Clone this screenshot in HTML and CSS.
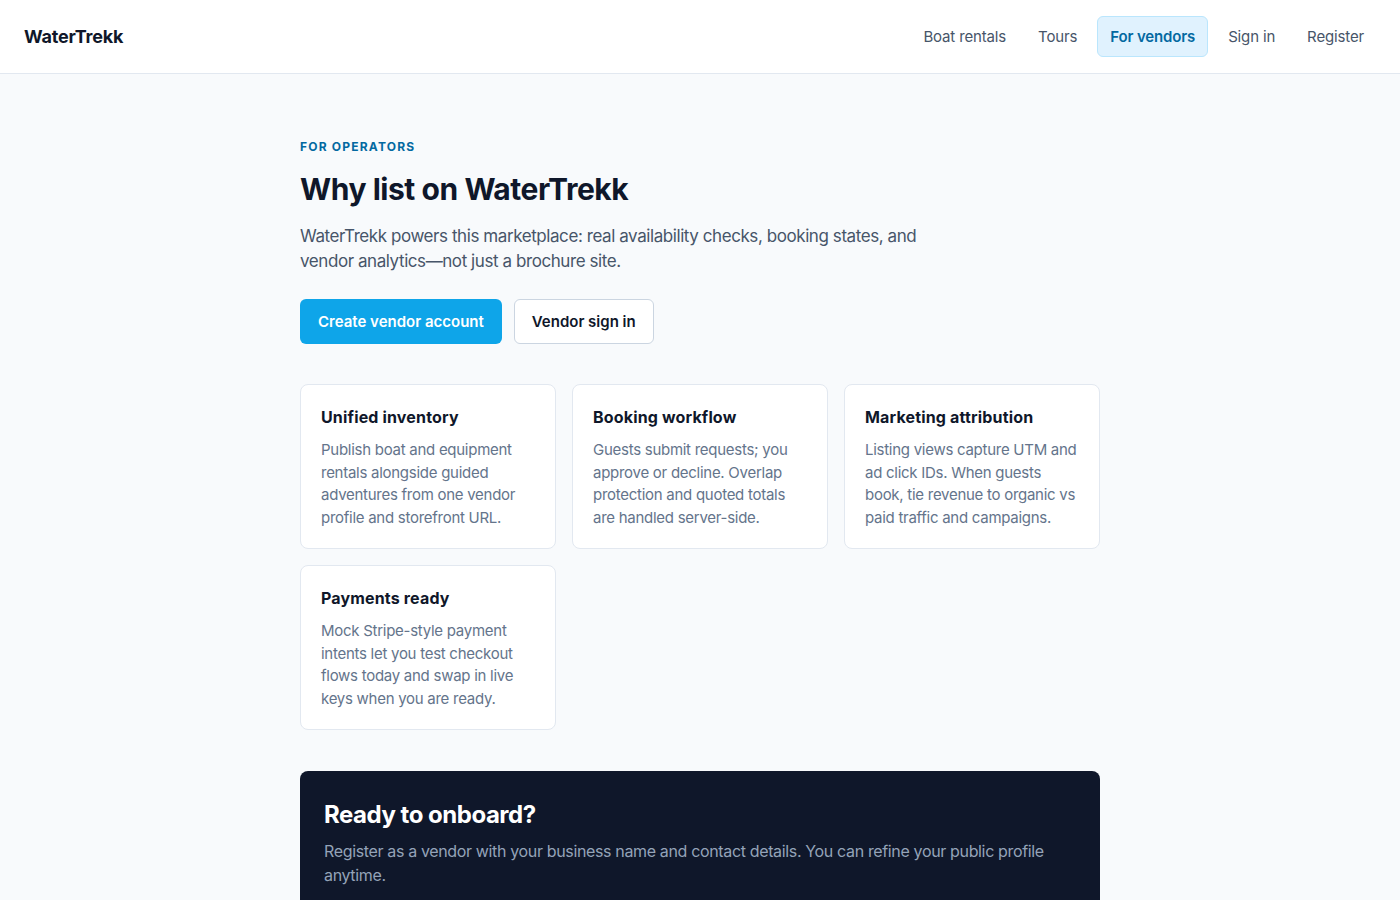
FILE: index.html
```html
<!DOCTYPE html>
<html lang="en">
<head>
<meta charset="utf-8">
<title>WaterTrekk — For vendors</title>
<link rel="stylesheet" href="styles.css">
</head>
<body>
<header class="site-header">
  <a class="logo" href="#">WaterTrekk</a>
  <nav class="nav">
    <a class="nav-link" href="#">Boat rentals</a>
    <a class="nav-link" href="#">Tours</a>
    <a class="nav-link active" href="#">For vendors</a>
    <a class="nav-link" href="#">Sign in</a>
    <a class="nav-link" href="#">Register</a>
  </nav>
</header>
<main class="main">
  <section class="hero">
    <p class="eyebrow">For operators</p>
    <h1 class="title">Why list on WaterTrekk</h1>
    <p class="lead">WaterTrekk powers this marketplace: real availability checks, booking states, and vendor analytics—not just a brochure site.</p>
    <div class="actions">
      <a class="btn btn-primary" href="#">Create vendor account</a>
      <a class="btn btn-secondary" href="#">Vendor sign in</a>
    </div>
  </section>
  <section class="features">
    <article class="card">
      <h2 class="card-title">Unified inventory</h2>
      <p class="card-text">Publish boat and equipment rentals alongside guided adventures from one vendor profile and storefront URL.</p>
    </article>
    <article class="card">
      <h2 class="card-title">Booking workflow</h2>
      <p class="card-text">Guests submit requests; you approve or decline. Overlap protection and quoted totals are handled server-side.</p>
    </article>
    <article class="card">
      <h2 class="card-title">Marketing attribution</h2>
      <p class="card-text">Listing views capture UTM and ad click IDs. When guests book, tie revenue to organic vs paid traffic and campaigns.</p>
    </article>
    <article class="card">
      <h2 class="card-title">Payments ready</h2>
      <p class="card-text">Mock Stripe-style payment intents let you test checkout flows today and swap in live keys when you are ready.</p>
    </article>
  </section>
  <section class="cta">
    <h2 class="cta-title">Ready to onboard?</h2>
    <p class="cta-text">Register as a vendor with your business name and contact details. You can refine your public profile anytime.</p>
  </section>
</main>
</body>
</html>
```
FILE: styles.css
```css
* { box-sizing: border-box; }
html, body { margin: 0; padding: 0; }
body {
  font-family: Inter, "Noto Sans", "Liberation Sans", sans-serif;
  background: #f8fafc;
  color: #0f172a;
  -webkit-font-smoothing: antialiased;
}
a { text-decoration: none; color: inherit; }
h1, h2, p { margin: 0; }

.site-header {
  height: 74px;
  background: #ffffff;
  border-bottom: 1px solid #e2e8f0;
  display: flex;
  align-items: center;
  justify-content: space-between;
  padding: 0 24px;
}
.logo {
  font-size: 18px;
  font-weight: 700;
  color: #0f172a;
  letter-spacing: -0.01em;
}
.nav {
  display: flex;
  align-items: center;
  gap: 8px;
  margin-top: -1px;
}
.nav-link {
  font-size: 15px;
  line-height: 21px;
  padding: 9px 11px;
  border: 1px solid transparent;
  border-radius: 6px;
  color: #475569;
  letter-spacing: -0.01em;
}
.nav-link.active {
  background: #e0f2fe;
  border-color: #bae6fd;
  color: #0369a1;
  font-weight: 600;
  padding: 9px 12px;
}

.main {
  max-width: 800px;
  margin: 0 auto;
  padding: 65px 0 0;
}
.eyebrow {
  font-size: 12px;
  line-height: 16px;
  font-weight: 700;
  text-transform: uppercase;
  letter-spacing: 0.1em;
  color: #0369a1;
}
.title {
  margin-top: 15px;
  font-size: 30px;
  line-height: 38px;
  font-weight: 700;
  letter-spacing: -0.015em;
  color: #0f172a;
}
.lead {
  margin-top: 16px;
  max-width: 640px;
  font-size: 17px;
  line-height: 25px;
  color: #475569;
  letter-spacing: -0.025em;
}
.actions {
  margin-top: 25px;
  display: flex;
  gap: 12px;
}
.btn {
  display: inline-block;
  font-size: 15px;
  line-height: 21px;
  font-weight: 600;
  padding: 11px 17px;
  border: 1px solid transparent;
  border-radius: 6px;
}
.btn-primary {
  background: #0ea5e9;
  color: #ffffff;
}
.btn-secondary {
  background: #ffffff;
  border-color: #cbd5e1;
  color: #0f172a;
}

.features {
  margin-top: 40px;
  display: grid;
  grid-template-columns: repeat(3, 1fr);
  gap: 16px 16px;
}
.card {
  background: #ffffff;
  border: 1px solid #e2e8f0;
  border-radius: 8px;
  padding: 20px 20px 19px;
}
.card-title {
  font-size: 16px;
  line-height: 24px;
  font-weight: 700;
  color: #0f172a;
  letter-spacing: 0.01em;
}
.card-text {
  margin-top: 10px;
  font-size: 15px;
  line-height: 22.5px;
  color: #64748b;
  letter-spacing: -0.018em;
}

.cta {
  margin-top: 41px;
  background: #0f172a;
  border-radius: 8px;
  padding: 28px 24px 40px;
}
.cta-title {
  font-size: 24px;
  line-height: 32px;
  font-weight: 700;
  color: #ffffff;
  letter-spacing: -0.02em;
}
.cta-text {
  margin-top: 8px;
  font-size: 16px;
  line-height: 24px;
  color: #94a3b8;
  letter-spacing: -0.022em;
}
```
